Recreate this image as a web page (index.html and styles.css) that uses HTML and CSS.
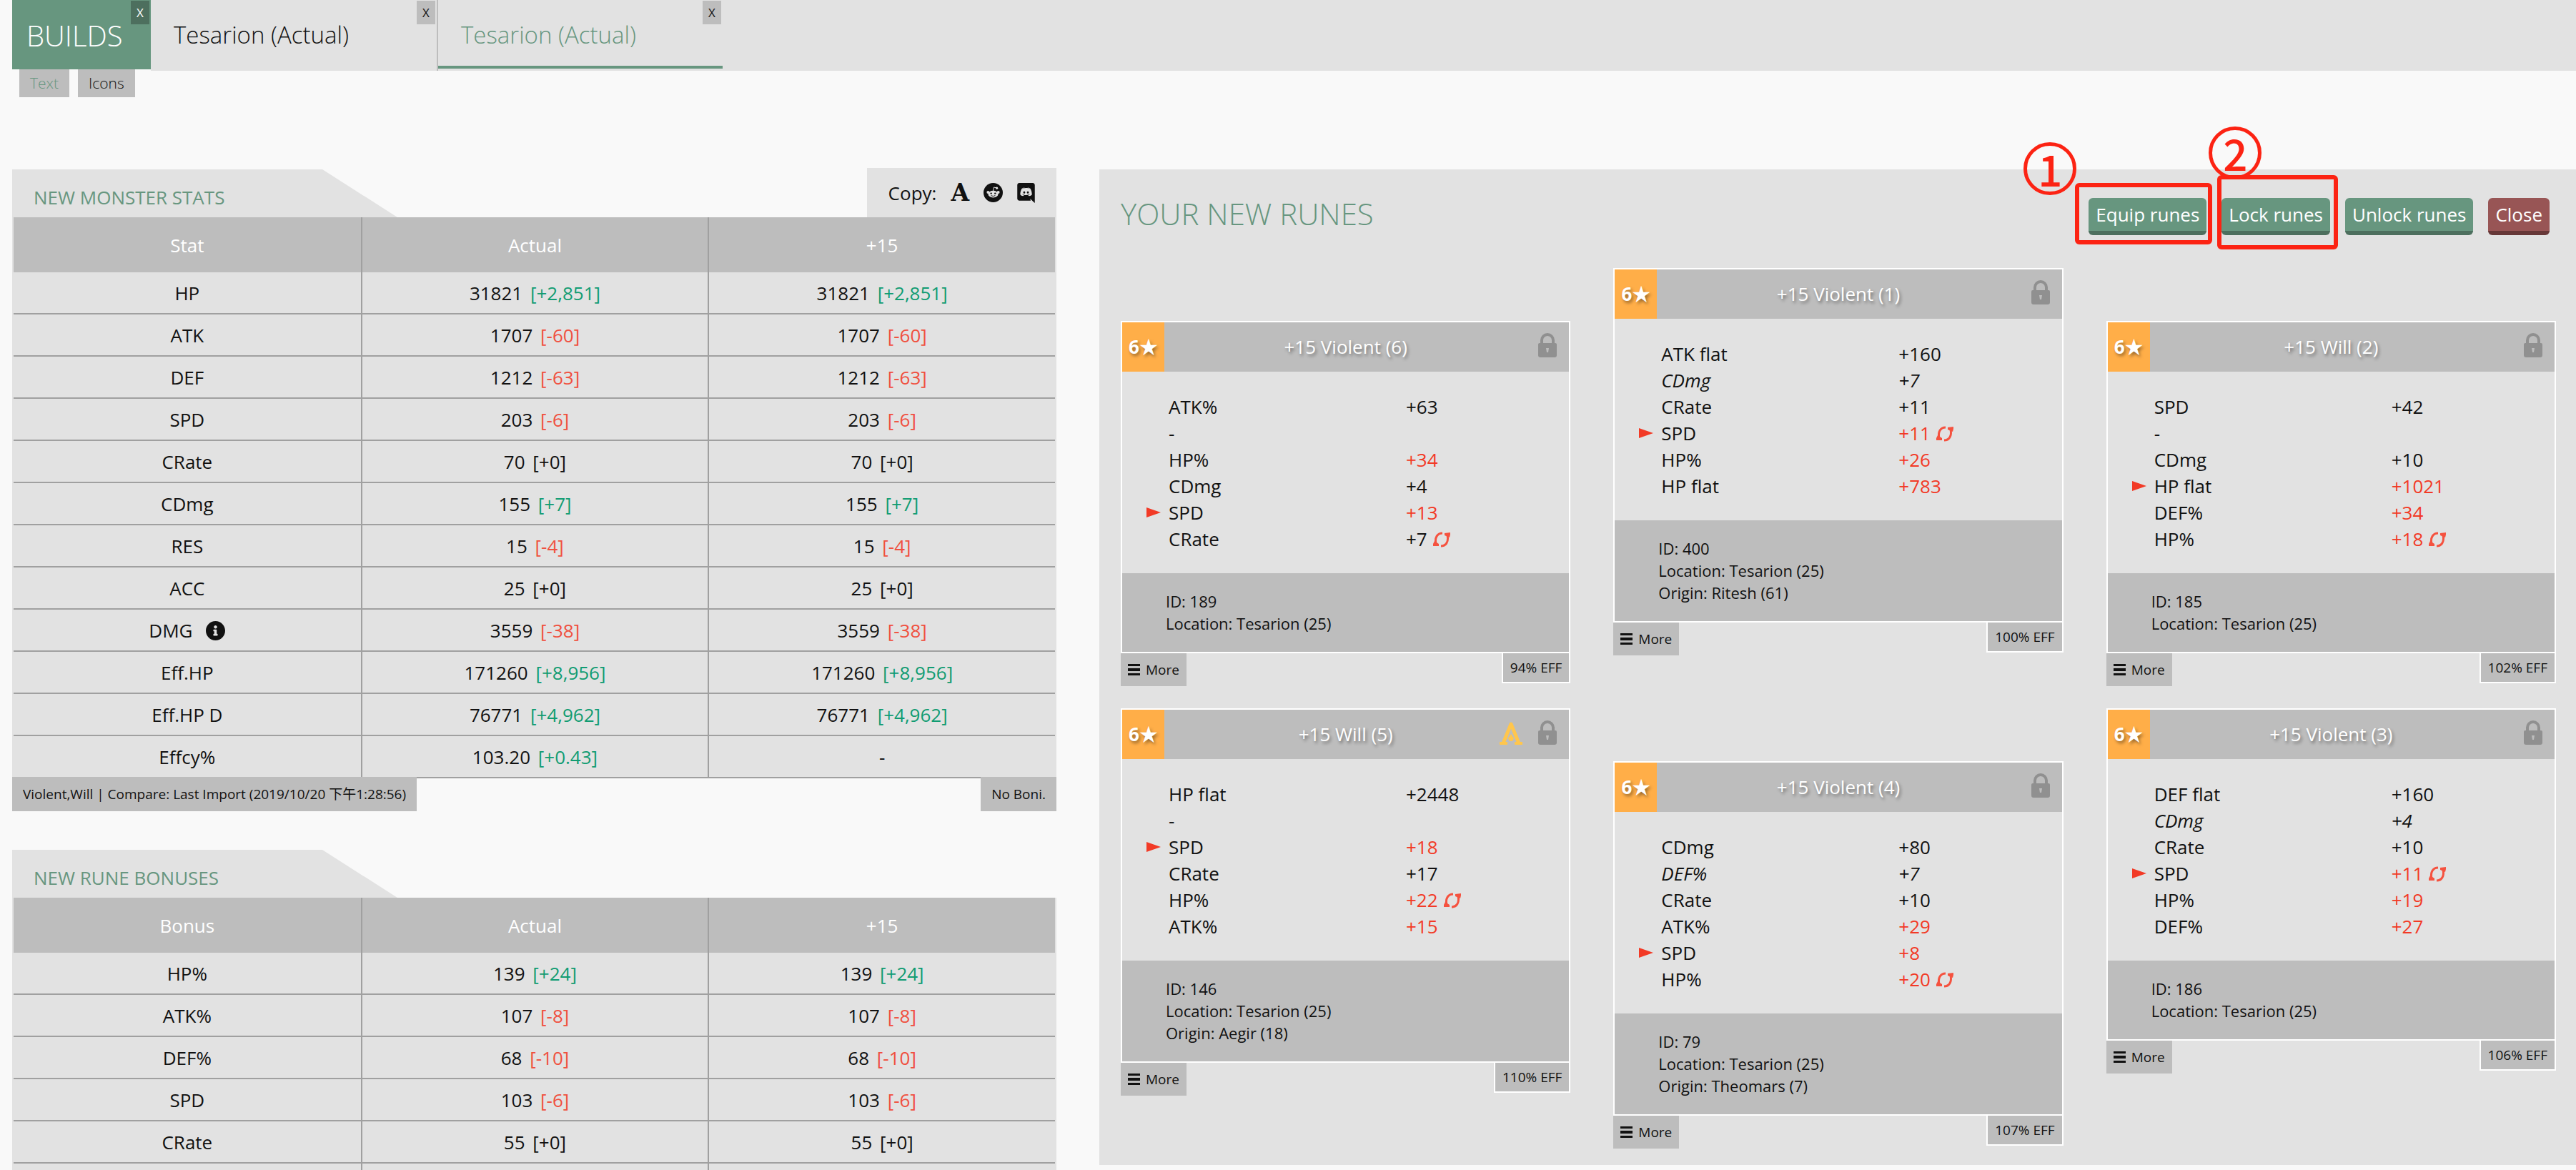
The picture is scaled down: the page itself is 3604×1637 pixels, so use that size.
FILE: index.html
```html
<!DOCTYPE html>
<html lang="en">
<head>
<meta charset="utf-8">
<title>Builds - Tesarion</title>
<link rel="stylesheet" href="styles.css">
</head>
<body>
<svg class="sprite" aria-hidden="true">
  <symbol id="i-lock" viewBox="0 0 28 36">
    <path d="M6 17V11a8 8 0 0 1 16 0v6" fill="none" stroke="currentColor" stroke-width="4"/>
    <path fill="currentColor" fill-rule="evenodd" d="M3 15h22a2 2 0 0 1 2 2v15a3 3 0 0 1-3 3H4a3 3 0 0 1-3-3V17a2 2 0 0 1 2-2zm9 7l1 6h2l1-6z"/>
  </symbol>
  <symbol id="i-ancient" viewBox="0 0 34 34">
    <path d="M6 31L17 4l11 27" fill="none" stroke="currentColor" stroke-width="5" stroke-linejoin="round"/>
    <path fill="currentColor" d="M1 29h11v4H1zM22 29h11v4H22zM17 18l4 6-2 4h-4l-2-4z"/>
  </symbol>
  <symbol id="i-sync" viewBox="0 0 24 22">
    <path d="M4 17C2 8 6 2 13 2M20 5c2 9-2 15-9 15" fill="none" stroke="currentColor" stroke-width="3"/>
    <path fill="currentColor" d="M0 20v-3l2-4 6 4v3zM24 1v3l-1 4-7-3V2z"/>
  </symbol>
  <symbol id="i-arrow" viewBox="0 0 20 14"><path fill="currentColor" d="M0 0l20 7L0 14z"/></symbol>
  <symbol id="i-bars" viewBox="0 0 17 16"><path fill="currentColor" d="M0 0h17v3H0zM0 6h17v4H0zM0 13h17v3H0z"/></symbol>
  <symbol id="i-info" viewBox="8 8 496 496"><path fill="currentColor" d="M256 8C119.043 8 8 119.083 8 256c0 136.997 111.043 248 248 248s248-111.003 248-248C504 119.083 392.957 8 256 8zm0 110c23.196 0 42 18.804 42 42s-18.804 42-42 42-42-18.804-42-42 18.804-42 42-42zm56 254c0 6.627-5.373 12-12 12h-88c-6.627 0-12-5.373-12-12v-24c0-6.627 5.373-12 12-12h12v-64h-12c-6.627 0-12-5.373-12-12v-24c0-6.627 5.373-12 12-12h64c6.627 0 12 5.373 12 12v100h12c6.627 0 12 5.373 12 12v24z"/></symbol>
  <symbol id="i-reddit" viewBox="0 0 27 27">
    <circle cx="13.5" cy="13.5" r="13.5" fill="currentColor"/>
    <g fill="#e2e2e2"><ellipse cx="13.5" cy="15.6" rx="7" ry="4.9"/><circle cx="6.4" cy="13" r="2"/><circle cx="20.6" cy="13" r="2"/><circle cx="18.6" cy="7.2" r="1.6"/></g>
    <path d="M13.5 11l1-5 4 1" fill="none" stroke="#e2e2e2" stroke-width="1"/>
    <circle cx="10.7" cy="14.6" r="1.2" fill="currentColor"/><circle cx="16.3" cy="14.6" r="1.2" fill="currentColor"/>
    <path d="M10.6 17.6q2.9 1.9 5.8 0" fill="none" stroke="currentColor"/>
  </symbol>
  <symbol id="i-discord" viewBox="0 0 448 512"><path fill="currentColor" d="M297.216 243.2c0 15.616-11.52 28.416-26.112 28.416-14.336 0-26.112-12.8-26.112-28.416s11.52-28.416 26.112-28.416c14.592 0 26.112 12.8 26.112 28.416zm-119.552-28.416c-14.592 0-26.112 12.8-26.112 28.416s11.776 28.416 26.112 28.416c14.592 0 26.112-12.8 26.112-28.416.256-15.616-11.52-28.416-26.112-28.416zM448 52.736V512c-64.494-56.994-43.868-38.128-118.784-107.776l13.568 47.36H52.48C23.552 451.584 0 428.032 0 398.848V52.736C0 23.552 23.552 0 52.48 0h343.04C424.448 0 448 23.552 448 52.736zm-72.96 242.688c0-82.432-36.864-149.248-36.864-149.248-36.864-27.648-71.936-26.88-71.936-26.88l-3.584 4.096c43.52 13.312 63.744 32.512 63.744 32.512-60.811-33.329-132.244-33.335-191.232-7.424-9.472 4.352-15.104 7.424-15.104 7.424s21.248-20.224 67.328-33.536l-2.56-3.072s-35.072-.768-71.936 26.88c0 0-36.864 66.816-36.864 149.248 0 0 21.504 37.12 78.08 38.912 0 0 9.472-11.52 17.152-21.248-32.512-9.728-44.8-30.208-44.8-30.208 3.766 2.636 9.976 6.053 10.496 6.4 43.21 24.198 104.588 32.126 159.744 8.96 8.96-3.328 18.944-8.192 29.44-15.104 0 0-12.8 20.992-46.336 30.464 7.68 9.728 16.896 20.736 16.896 20.736 56.576-1.792 78.336-38.912 78.336-38.912z"/></symbol>
</svg>

<div class="app">
  <header class="topbar">
    <div class="builds">
      <a class="builds-link" href="#builds">BUILDS</a>
      <button class="tab-close dark" type="button">X</button>
    </div>
    <nav class="tabs">
      <div class="tab"><a href="#build-1">Tesarion (Actual)</a><button class="tab-close" type="button">X</button></div>
      <div class="tab active"><a href="#build-2">Tesarion (Actual)</a><button class="tab-close" type="button">X</button></div>
    </nav>
  </header>
  <div class="view-switch">
    <button class="selected" type="button">Text</button>
    <button type="button">Icons</button>
  </div>

  <main class="content">
    <div class="left">
      <section class="stats">
        <div class="stats-head">
          <h2 class="stats-title">NEW MONSTER STATS</h2>
          <div class="copy">
            <span>Copy:</span>
            <button class="copy-text" type="button">A</button>
            <button type="button" aria-label="Reddit"><svg width="27" height="27"><use href="#i-reddit"/></svg></button>
            <button type="button" aria-label="Discord"><svg width="25" height="28"><use href="#i-discord"/></svg></button>
          </div>
        </div>
        <table class="stats-table">
          <thead><tr><th>Stat</th><th>Actual</th><th>+15</th></tr></thead>
          <tbody>
            <tr><td>HP</td><td>31821 <span class="up">[+2,851]</span></td><td>31821 <span class="up">[+2,851]</span></td></tr>
            <tr><td>ATK</td><td>1707 <span class="down">[-60]</span></td><td>1707 <span class="down">[-60]</span></td></tr>
            <tr><td>DEF</td><td>1212 <span class="down">[-63]</span></td><td>1212 <span class="down">[-63]</span></td></tr>
            <tr><td>SPD</td><td>203 <span class="down">[-6]</span></td><td>203 <span class="down">[-6]</span></td></tr>
            <tr><td>CRate</td><td>70 <span>[+0]</span></td><td>70 <span>[+0]</span></td></tr>
            <tr><td>CDmg</td><td>155 <span class="up">[+7]</span></td><td>155 <span class="up">[+7]</span></td></tr>
            <tr><td>RES</td><td>15 <span class="down">[-4]</span></td><td>15 <span class="down">[-4]</span></td></tr>
            <tr><td>ACC</td><td>25 <span>[+0]</span></td><td>25 <span>[+0]</span></td></tr>
            <tr><td>DMG <svg class="info" width="27" height="27"><use href="#i-info"/></svg></td><td>3559 <span class="down">[-38]</span></td><td>3559 <span class="down">[-38]</span></td></tr>
            <tr><td>Eff.HP</td><td>171260 <span class="up">[+8,956]</span></td><td>171260 <span class="up">[+8,956]</span></td></tr>
            <tr><td>Eff.HP D</td><td>76771 <span class="up">[+4,962]</span></td><td>76771 <span class="up">[+4,962]</span></td></tr>
            <tr><td>Effcy%</td><td>103.20 <span class="up">[+0.43]</span></td><td>-</td></tr>
          </tbody>
        </table>
        <div class="stats-foot">
          <span class="chip">Violent,Will | Compare: Last Import (2019/10/20 下午1:28:56)</span>
          <span class="chip">No Boni.</span>
        </div>
      </section>

      <section class="stats">
        <div class="stats-head">
          <h2 class="stats-title">NEW RUNE BONUSES</h2>
        </div>
        <table class="stats-table">
          <thead><tr><th>Bonus</th><th>Actual</th><th>+15</th></tr></thead>
          <tbody>
            <tr><td>HP%</td><td>139 <span class="up">[+24]</span></td><td>139 <span class="up">[+24]</span></td></tr>
            <tr><td>ATK%</td><td>107 <span class="down">[-8]</span></td><td>107 <span class="down">[-8]</span></td></tr>
            <tr><td>DEF%</td><td>68 <span class="down">[-10]</span></td><td>68 <span class="down">[-10]</span></td></tr>
            <tr><td>SPD</td><td>103 <span class="down">[-6]</span></td><td>103 <span class="down">[-6]</span></td></tr>
            <tr><td>CRate</td><td>55 <span>[+0]</span></td><td>55 <span>[+0]</span></td></tr>
            <tr><td></td><td></td><td></td></tr>
          </tbody>
        </table>
      </section>
    </div>

    <section class="runes">
      <div class="runes-head">
        <h1>YOUR NEW RUNES</h1>
        <div class="actions">
          <div class="action">
            <button class="btn" type="button">Equip runes</button>
            <span class="frame frame-1"></span><span class="step step-1">1</span>
          </div>
          <div class="action">
            <button class="btn" type="button">Lock runes</button>
            <span class="frame frame-2"></span><span class="step step-2">2</span>
          </div>
          <div class="action"><button class="btn" type="button">Unlock runes</button></div>
          <div class="action"><button class="btn danger" type="button">Close</button></div>
        </div>
      </div>

      <div class="rune-grid">
        <div class="rune-col side">
          <article class="rune">
            <div class="card">
              <header class="card-head"><span class="grade">6★</span><h3>+15 Violent (6)</h3><span class="badges"><svg class="lock" width="28" height="36"><use href="#i-lock"/></svg></span></header>
              <table class="rune-stats">
                <tr><td class="mark"></td><td class="name">ATK%</td><td>+63</td></tr>
                <tr><td class="mark"></td><td class="name">-</td><td></td></tr>
                <tr><td class="mark"></td><td class="name">HP%</td><td class="hot">+34</td></tr>
                <tr><td class="mark"></td><td class="name">CDmg</td><td>+4</td></tr>
                <tr><td class="mark"><svg width="20" height="14"><use href="#i-arrow"/></svg></td><td class="name">SPD</td><td class="hot">+13</td></tr>
                <tr><td class="mark"></td><td class="name">CRate</td><td>+7<svg class="sync" width="24" height="22"><use href="#i-sync"/></svg></td></tr>
              </table>
              <div class="meta"><p>ID: 189</p><p>Location: Tesarion (25)</p></div>
            </div>
            <div class="card-foot"><button class="more" type="button"><svg width="17" height="16"><use href="#i-bars"/></svg>More</button><span class="eff">94% EFF</span></div>
          </article>

          <article class="rune">
            <div class="card">
              <header class="card-head"><span class="grade">6★</span><h3>+15 Will (5)</h3><span class="badges"><svg class="ancient" width="34" height="34"><use href="#i-ancient"/></svg><svg class="lock" width="28" height="36"><use href="#i-lock"/></svg></span></header>
              <table class="rune-stats">
                <tr><td class="mark"></td><td class="name">HP flat</td><td>+2448</td></tr>
                <tr><td class="mark"></td><td class="name">-</td><td></td></tr>
                <tr><td class="mark"><svg width="20" height="14"><use href="#i-arrow"/></svg></td><td class="name">SPD</td><td class="hot">+18</td></tr>
                <tr><td class="mark"></td><td class="name">CRate</td><td>+17</td></tr>
                <tr><td class="mark"></td><td class="name">HP%</td><td class="hot">+22<svg class="sync" width="24" height="22"><use href="#i-sync"/></svg></td></tr>
                <tr><td class="mark"></td><td class="name">ATK%</td><td class="hot">+15</td></tr>
              </table>
              <div class="meta"><p>ID: 146</p><p>Location: Tesarion (25)</p><p>Origin: Aegir (18)</p></div>
            </div>
            <div class="card-foot"><button class="more" type="button"><svg width="17" height="16"><use href="#i-bars"/></svg>More</button><span class="eff">110% EFF</span></div>
          </article>
        </div>

        <div class="rune-col middle">
          <article class="rune">
            <div class="card">
              <header class="card-head"><span class="grade">6★</span><h3>+15 Violent (1)</h3><span class="badges"><svg class="lock" width="28" height="36"><use href="#i-lock"/></svg></span></header>
              <table class="rune-stats">
                <tr><td class="mark"></td><td class="name">ATK flat</td><td>+160</td></tr>
                <tr class="innate"><td class="mark"></td><td class="name">CDmg</td><td>+7</td></tr>
                <tr><td class="mark"></td><td class="name">CRate</td><td>+11</td></tr>
                <tr><td class="mark"><svg width="20" height="14"><use href="#i-arrow"/></svg></td><td class="name">SPD</td><td class="hot">+11<svg class="sync" width="24" height="22"><use href="#i-sync"/></svg></td></tr>
                <tr><td class="mark"></td><td class="name">HP%</td><td class="hot">+26</td></tr>
                <tr><td class="mark"></td><td class="name">HP flat</td><td class="hot">+783</td></tr>
              </table>
              <div class="meta"><p>ID: 400</p><p>Location: Tesarion (25)</p><p>Origin: Ritesh (61)</p></div>
            </div>
            <div class="card-foot"><button class="more" type="button"><svg width="17" height="16"><use href="#i-bars"/></svg>More</button><span class="eff">100% EFF</span></div>
          </article>

          <article class="rune">
            <div class="card">
              <header class="card-head"><span class="grade">6★</span><h3>+15 Violent (4)</h3><span class="badges"><svg class="lock" width="28" height="36"><use href="#i-lock"/></svg></span></header>
              <table class="rune-stats">
                <tr><td class="mark"></td><td class="name">CDmg</td><td>+80</td></tr>
                <tr class="innate"><td class="mark"></td><td class="name">DEF%</td><td>+7</td></tr>
                <tr><td class="mark"></td><td class="name">CRate</td><td>+10</td></tr>
                <tr><td class="mark"></td><td class="name">ATK%</td><td class="hot">+29</td></tr>
                <tr><td class="mark"><svg width="20" height="14"><use href="#i-arrow"/></svg></td><td class="name">SPD</td><td class="hot">+8</td></tr>
                <tr><td class="mark"></td><td class="name">HP%</td><td class="hot">+20<svg class="sync" width="24" height="22"><use href="#i-sync"/></svg></td></tr>
              </table>
              <div class="meta"><p>ID: 79</p><p>Location: Tesarion (25)</p><p>Origin: Theomars (7)</p></div>
            </div>
            <div class="card-foot"><button class="more" type="button"><svg width="17" height="16"><use href="#i-bars"/></svg>More</button><span class="eff">107% EFF</span></div>
          </article>
        </div>

        <div class="rune-col side">
          <article class="rune">
            <div class="card">
              <header class="card-head"><span class="grade">6★</span><h3>+15 Will (2)</h3><span class="badges"><svg class="lock" width="28" height="36"><use href="#i-lock"/></svg></span></header>
              <table class="rune-stats">
                <tr><td class="mark"></td><td class="name">SPD</td><td>+42</td></tr>
                <tr><td class="mark"></td><td class="name">-</td><td></td></tr>
                <tr><td class="mark"></td><td class="name">CDmg</td><td>+10</td></tr>
                <tr><td class="mark"><svg width="20" height="14"><use href="#i-arrow"/></svg></td><td class="name">HP flat</td><td class="hot">+1021</td></tr>
                <tr><td class="mark"></td><td class="name">DEF%</td><td class="hot">+34</td></tr>
                <tr><td class="mark"></td><td class="name">HP%</td><td class="hot">+18<svg class="sync" width="24" height="22"><use href="#i-sync"/></svg></td></tr>
              </table>
              <div class="meta"><p>ID: 185</p><p>Location: Tesarion (25)</p></div>
            </div>
            <div class="card-foot"><button class="more" type="button"><svg width="17" height="16"><use href="#i-bars"/></svg>More</button><span class="eff">102% EFF</span></div>
          </article>

          <article class="rune">
            <div class="card">
              <header class="card-head"><span class="grade">6★</span><h3>+15 Violent (3)</h3><span class="badges"><svg class="lock" width="28" height="36"><use href="#i-lock"/></svg></span></header>
              <table class="rune-stats">
                <tr><td class="mark"></td><td class="name">DEF flat</td><td>+160</td></tr>
                <tr class="innate"><td class="mark"></td><td class="name">CDmg</td><td>+4</td></tr>
                <tr><td class="mark"></td><td class="name">CRate</td><td>+10</td></tr>
                <tr><td class="mark"><svg width="20" height="14"><use href="#i-arrow"/></svg></td><td class="name">SPD</td><td class="hot">+11<svg class="sync" width="24" height="22"><use href="#i-sync"/></svg></td></tr>
                <tr><td class="mark"></td><td class="name">HP%</td><td class="hot">+19</td></tr>
                <tr><td class="mark"></td><td class="name">DEF%</td><td class="hot">+27</td></tr>
              </table>
              <div class="meta"><p>ID: 186</p><p>Location: Tesarion (25)</p></div>
            </div>
            <div class="card-foot"><button class="more" type="button"><svg width="17" height="16"><use href="#i-bars"/></svg>More</button><span class="eff">106% EFF</span></div>
          </article>
        </div>
      </div>
    </section>
  </main>
</div>
</body>
</html>
```
FILE: styles.css
```css
:root {
  --page: #f9f9f9;
  --panel: #e2e2e2;
  --mid: #bdbdbd;
  --line: #a0a0a0;
  --green: #67967f;
  --green-dark: #4d6f5e;
  --text: #111;
  --hot: #f23a26;
  --annotation: #fc2313;
}

* { box-sizing: border-box; }

body {
  margin: 0;
  background: var(--page);
  color: var(--text);
  font: 26px/36px "Open Sans", "Noto Sans CJK SC", sans-serif;
}

h1, h2, h3, p { margin: 0; font-size: 26px; font-weight: 400; }
a { color: inherit; text-decoration: none; }
button {
  margin: 0;
  padding: 0;
  border: 0;
  background: none;
  color: inherit;
  font: inherit;
  cursor: pointer;
}
svg { display: block; }
.sprite { display: none; }

.app { height: 100vh; overflow: hidden; }

/* Top navigation */
.topbar { display: flex; align-items: flex-start; padding-left: 17px; }
.builds {
  position: relative;
  width: 194px;
  height: 97px;
  padding-left: 20px;
  background: var(--green);
  color: #fff;
  font-size: 40px;
  font-weight: 300;
  line-height: 100px;
}
.tabs { display: flex; flex: 1; height: 99px; background: var(--panel); }
.tab {
  position: relative;
  width: 402px;
  padding: 0 32px;
  border-right: 2px solid var(--mid);
  font-size: 33px;
  font-weight: 300;
  line-height: 97px;
}
.tab.active {
  width: 398px;
  height: 96px;
  border-right: 0;
  border-bottom: 4px solid var(--green);
  color: var(--green);
}
.tab-close {
  position: absolute;
  top: 1px;
  right: 2px;
  width: 26px;
  height: 33px;
  background: var(--mid);
  color: var(--text);
  font-size: 17px;
  font-weight: 400;
  line-height: 33px;
  text-align: center;
}
.tab-close.dark { background: var(--green-dark); color: #fff; }

.view-switch { display: flex; gap: 12px; margin-top: -2px; padding-left: 27px; }
.view-switch button {
  position: relative;
  height: 39px;
  padding: 0 15px;
  background: var(--mid);
  font-size: 21px;
  font-weight: 300;
  line-height: 39px;
}
.view-switch .selected { color: var(--green); }

/* Page body */
.content {
  display: grid;
  grid-template-columns: minmax(0, 1461fr) minmax(0, 2066fr);
  gap: 60px;
  align-items: start;
  padding: 99px 0 0 17px;
}

/* Stat tables */
.stats { margin-bottom: 54px; }
.stats-head { display: flex; justify-content: space-between; align-items: flex-end; }
.stats-title {
  width: 539px;
  height: 67px;
  padding: 12px 0 0 30px;
  background: var(--panel);
  clip-path: polygon(0 0, 434px 0, 539px 100%, 0 100%);
  color: var(--green);
  line-height: 54px;
}
.copy {
  display: flex;
  align-items: center;
  gap: 20px;
  height: 69px;
  padding: 0 30px;
  background: var(--panel);
}
.copy-text { font: bold 33px/33px "DejaVu Serif", serif; }

.stats-table {
  width: 100%;
  table-layout: fixed;
  border-spacing: 0;
  border: solid var(--panel);
  border-width: 0 2px;
  text-align: center;
}
.stats-table th {
  height: 77px;
  padding: 0;
  background: var(--mid);
  color: #fff;
  font-weight: 400;
}
.stats-table td {
  height: 59px;
  padding: 0;
  border-bottom: 2px solid var(--line);
  background: var(--panel);
}
.stats-table th + th, .stats-table td + td { border-left: 2px solid var(--line); }
.up { color: #119c72; }
.down { color: #f0503f; }
.stats-table td span { margin-left: 4px; }
.info { display: inline-block; margin-left: 12px; vertical-align: -4px; }

.stats-foot { display: flex; justify-content: space-between; margin-top: -2px; }
.chip {
  height: 48px;
  padding: 0 15px;
  background: var(--mid);
  font-size: 19px;
  line-height: 48px;
}

/* Rune panel */
.runes { margin-top: 2px; padding-bottom: 23px; background: var(--panel); }
.runes-head {
  display: flex;
  justify-content: space-between;
  align-items: flex-start;
  padding: 40px 37px 46px 30px;
}
h1 { color: var(--green); font-size: 42px; font-weight: 300; line-height: 44px; }

.actions { display: flex; gap: 21px; }
.action { position: relative; }
.btn {
  height: 52px;
  padding: 0 10px;
  border-bottom: 6px solid var(--green-dark);
  border-radius: 6px;
  background: var(--green);
  color: #fff;
}
.btn.danger { border-color: #673838; background: #985555; }

/* Numbered call-outs over the buttons */
.frame {
  position: absolute;
  border: 6px solid var(--annotation);
  border-radius: 6px;
  pointer-events: none;
}
.frame-1 { inset: -21px -8px -13px -19px; }
.frame-2 { inset: -32px -11px -20px -6px; }
.step {
  position: absolute;
  width: 74px;
  height: 74px;
  border: 5px solid var(--annotation);
  border-radius: 50%;
  color: var(--annotation);
  font: 500 60px/62px "Noto Sans CJK SC", sans-serif;
  text-align: center;
}
.step-1 { top: -78px; left: -91px; }
.step-2 { top: -100px; left: -18px; }

.rune-grid {
  display: grid;
  grid-template-columns: repeat(3, minmax(0, 1fr));
  gap: 60px;
  align-items: start;
  padding: 0 28px 0 30px;
}
.rune-col { display: flex; flex-direction: column; }
.rune-col.side { gap: 31px; padding-top: 74px; }
.rune-col.middle { gap: 148px; }

.card { border: 2px solid #fff; }
.card-head {
  display: grid;
  grid-template-columns: 59px 1fr 59px;
  height: 69px;
  background: var(--mid);
  color: #fff;
  line-height: 69px;
  text-align: center;
  text-shadow: 2px 3px 4px rgba(0, 0, 0, 0.4);
}
.grade { background: #ffae48; font-weight: 700; }
.badges { display: flex; justify-content: flex-end; gap: 20px; padding: 14px 16px 0 0; }
.lock { flex: none; color: #909090; }
.ancient { flex: none; margin-top: 2px; color: #ffc64d; }

.rune-stats { width: 100%; margin: 30px 0; table-layout: fixed; border-spacing: 0; }
.rune-stats td { height: 37px; padding: 0; }
.rune-stats .mark { width: 65px; padding-left: 34px; color: var(--hot); }
.rune-stats .name { width: 332px; }
.innate { font-style: italic; }
.hot { color: var(--hot); }
.sync { display: inline-block; margin-left: 8px; color: #f5523f; vertical-align: -2px; }

.meta { padding: 24px 61px; background: var(--mid); }
.meta p { font-size: 22px; line-height: 31px; }

.card-foot { display: flex; justify-content: space-between; align-items: flex-start; }
.more {
  display: flex;
  align-items: center;
  gap: 8px;
  height: 46px;
  padding: 0 10px;
  background: var(--mid);
  font-size: 19px;
}
.eff {
  height: 42px;
  padding: 0 10px;
  border: solid #fff;
  border-width: 0 2px 2px;
  background: var(--mid);
  font-size: 19px;
  line-height: 40px;
}
```
